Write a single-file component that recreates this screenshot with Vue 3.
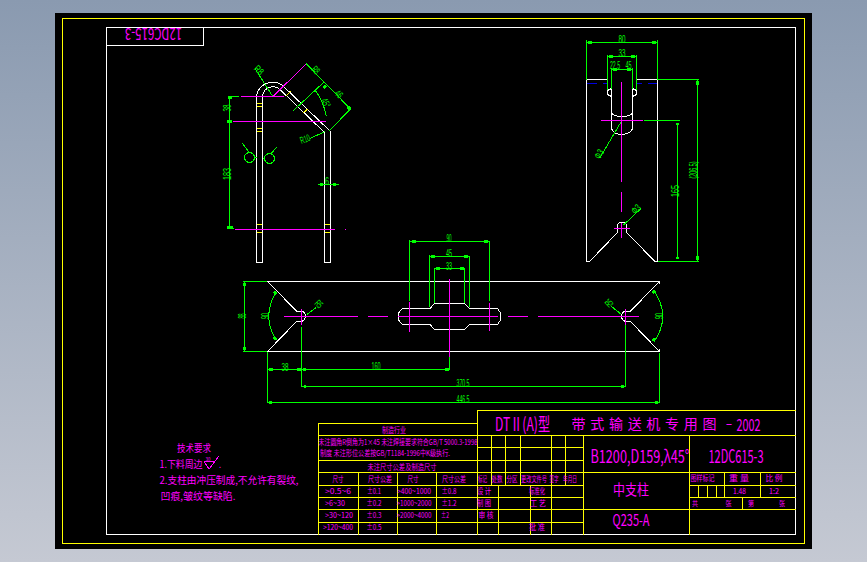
<script setup>
// every coordinate below is in screenshot pixels, the viewBox starts at the black area
const white = [
  // frame + flipped title box
  "M106.5 27.5H795.5V534.5H106.5Z M106.5 45.5H203.5V27.5",
  // bent rod, side view
  "M256.5 262.5V96A16.5 16.5 0 0 1 282 85L330.5 131.5V262.5H324.5V132.5L280 89.5A10.5 10.5 0 0 0 262.5 96V262.5Z",
  // front view plate
  "M586.5 79.5V261.5H589.5L617.5 232.5V226.5A4.5 4.5 0 0 1 626.5 226.5V232.5L655 261.5H657.5V79.5H636.5V94.5L632.5 96.5V88.5L636.5 90.5 M586.5 79.5H607.5V94.5L611.5 96.5V88.5L607.5 90.5",
  "M611.5 96.5V128.5Q613 134 621.5 134.5Q631 134 632.5 128.5V96.5",
  "M611.5 112.5Q613 116.5 621.5 116.5Q631 116.5 632.5 112.5",
  // plan view
  "M267.5 281.5H659.5L630.5 311H625.5A5.5 5.5 0 0 0 625.5 321.5H630.5L659.5 351.5H267.5L296.5 321.5H301.5A5.5 5.5 0 0 0 301.5 311H296.5L267.5 281.5",
  "M434.5 303.5H464.5L469.5 308.5H497.5L500.5 313V320L497.5 324.5H469.5L464.5 329.5H434.5L430 324.5H402.5L398.5 320V313L402.5 308.5H430Z",
  "M659.5 281.5V284 M659.5 351.5V349"
];

const green = [
  // rod dims
  "M229.5 96.5V228.5 M228 96.5H239 M228 228.5H234",
  "M306 63.5L350.5 109L328.5 131.5 M293.5 110.5L324 82 M255 68.5L272.5 96 M310 138.5L325 131.5",
  "M315 90Q323 100 326.5 116.5",
  "M242.5 143.5L249.5 153 M254.5 157.5H257 M276.5 147.5L271.5 153 M262.5 158.5H264.5",
  "M317.5 184.5H338.5",
  // front view dims
  "M586.5 40V79.5 M657.5 40V79.5 M586.5 42.5H657.5",
  "M607.5 55V90 M636.5 55V90 M607.5 56.5H636.5",
  "M611.5 68V89 M632.5 68V89 M611.5 69.5H632.5",
  "M599.5 158.5L621 122 M641 208.5L623.5 225",
  "M644 120.5H680 M677.5 123V258.5",
  "M657.5 79.5H698.5 M657.5 261.5H698.5 M697.5 79.5V261.5",
  // plan view dims
  "M244.5 281.5V351.5 M243 281.5H267 M243 351.5H267",
  "M275.5 293Q262 316.5 275.5 339 M653.5 290Q672 316.5 653.5 342.5",
  "M307 314.5L316 307.5 M611.5 306.5L621.5 314.5",
  "M409.5 239.5V301 M489.5 241V301 M409.5 241.5H489.5",
  "M429.5 254.5V307 M469.5 256V307 M429.5 256.5H469.5",
  "M434.5 267.5V303 M464.5 268V303 M434.5 268.5H464.5",
  "M267.5 351.5V402.5H659.5V353 M267.5 369.5H449.5V356",
  "M301.5 326.5V386.5H625.5V322"
];

const arrows = [
  "M228 97.5H232 M227 121.5H232 M227 227.5H233",
  "M324 86L326 88 M348 107L350 109",
  "M320 184.5H323 M333 184.5H336",
  "M588 42.5H592 M652 42.5H656 M609 56.5H613 M631 56.5H635 M613 69.5H617 M627 69.5H631",
  "M677.5 123V125 M677.5 257V259 M697 81V85 M697 256V260",
  "M244.5 283V286 M244.5 347V350",
  "M274 294L276 292 M274 337L276 340 M653 291L655 293 M653 341L655 338",
  "M412 241.5H416 M484 241.5H488 M431 256.5H435 M464 256.5H468 M436 268.5H440 M460 268.5H464",
  "M269 369.5H273 M297 369.5H301 M303 369.5H306 M445 369.5H449 M304 386.5H306 M621 386.5H624 M269 402.5H272 M655 402.5H658"
];

const magenta = [
  "M241 96.5H284 M233 121.5H326 M235 229.5H335 M345 229.5H346 M273.5 96L306 64",
  "M621.5 82V181.5 M621.5 192V211.5 M621.5 222.5V237.5 M601 120.5H643 M614 228.5H629.5",
  "M284 316.5H358 M368 316.5H388 M398 316.5H498 M508 316.5H528 M538 316.5H639",
  "M301.5 309V324.5 M409.5 302V331.5 M449.5 279V356.5 M489.5 303V331 M625.5 309V324.5"
];

const yellow = [
  "M62.5 18.5H804.5V543.5H62.5Z",
  "M318.5 534.5V423.5H477.5 M477.5 534.5V410.5H795.5",
  "M318.5 435.5H795.5 M318.5 460.5H477.5 M318.5 472.5H795.5",
  "M318.5 485H583.5 M318.5 497.5H583.5 M318.5 509.5H795.5 M318.5 522.5H583.5",
  "M358.5 472.5V534.5 M397.5 472.5V534.5 M436.5 472.5V534.5",
  "M491.5 435.5V485 M505.5 435.5V485 M520.5 435.5V485 M551.5 435.5V534.5 M565.5 435.5V485",
  "M477.5 447.5H583.5 M477.5 460.5H583.5",
  "M498.5 485V534.5 M530.5 485V534.5 M583.5 435.5V534.5 M689.5 435.5V534.5",
  "M689.5 485H795.5 M689.5 497.5H795.5",
  "M724.5 472.5V497.5 M760.5 472.5V497.5 M698.5 485V497.5 M707.5 485V497.5 M716.5 485V497.5 M742.5 497.5V509.5",
  // little fill marks on the rod
  "M257 103.5H262 M257 106.5H262 M257 128.5H262 M257 131.5H262 M257 224.5H262 M257 232.5H262",
  "M325 224.5H330 M325 232.5H330 M286 96L290.5 91.5 M303.5 112.5L308.5 108.5"
];

const dims = [
  { t: "R8", x: 259, y: 70, w: 9, r: 45 },
  { t: "R8", x: 316, y: 70, w: 7, r: 45 },
  { t: "46", x: 339, y: 94, w: 7, r: 45 },
  { t: "45°", x: 326, y: 103, w: 9, r: 60 },
  { t: "R10", x: 305, y: 139, w: 10, r: -20 },
  { t: "38", x: 227, y: 108, w: 7, r: -90 },
  { t: "183", x: 227, y: 174, w: 12, r: -90 },
  { t: "6", x: 327, y: 181, w: 4 },
  { t: "80", x: 622, y: 39, w: 7 },
  { t: "33", x: 622, y: 53, w: 7 },
  { t: "22.5", x: 615, y: 65, w: 10 },
  { t: "45", x: 628.5, y: 65, w: 6 },
  { t: "Φ3", x: 599, y: 154, w: 9, r: -60 },
  { t: "Φ3", x: 636, y: 209, w: 9, r: -45 },
  { t: "165", x: 675, y: 191, w: 12, r: -90 },
  { t: "(206.5)", x: 693, y: 170, w: 17, r: -90 },
  { t: "88", x: 242, y: 316, w: 5, r: -90 },
  { t: "90", x: 265, y: 316, w: 6, r: -90 },
  { t: "90", x: 659, y: 316, w: 6, r: -90 },
  { t: "R5", x: 319, y: 304, w: 7, r: 45 },
  { t: "R5", x: 609, y: 303, w: 7, r: -45 },
  { t: "90", x: 449, y: 238.5, w: 5 },
  { t: "45", x: 449, y: 253, w: 6 },
  { t: "33", x: 449, y: 266, w: 6 },
  { t: "38", x: 285, y: 367, w: 7 },
  { t: "160", x: 376, y: 366, w: 9 },
  { t: "370.5", x: 463, y: 383, w: 13 },
  { t: "446.5", x: 463, y: 399, w: 13 }
];

const notes = [
  { t: "技术要求", x: 194, y: 447, w: 34, f: 10 },
  { t: "1.下料周边", x: 181, y: 463, w: 43, f: 10 },
  { t: "30", x: 208, y: 458, w: 5, f: 5 },
  { t: ".", x: 220, y: 464, w: 2, f: 9 },
  { t: "2.支柱由冲压制成,不允许有裂纹,", x: 229, y: 479, w: 139, f: 10 },
  { t: "凹痕,皱纹等缺陷.", x: 198, y: 495, w: 75, f: 10 },

  { t: "制造行业", x: 394, y: 429.5, w: 24, f: 8 },
  { t: "未注圆角R倒角为1×45 未注焊接要求符合GB/T 5000.3-1998", x: 398, y: 441, w: 159, f: 8 },
  { t: "制度 未注形位公差按GB/T1184-1996中K级执行.", x: 385, y: 452.5, w: 130, f: 8 },
  { t: "未注尺寸公差及制造尺寸", x: 402, y: 466.5, w: 69, f: 8 },

  { t: "尺寸", x: 338, y: 478.5, w: 11, f: 8 },
  { t: "尺寸公差", x: 380, y: 478.5, w: 24, f: 8 },
  { t: "尺寸", x: 413, y: 478.5, w: 11, f: 8 },
  { t: "尺寸公差", x: 454, y: 478.5, w: 24, f: 8 },
  { t: ">0.5~6", x: 338, y: 490.5, w: 26, f: 8 },
  { t: "±0.1", x: 374, y: 490.5, w: 14, f: 8 },
  { t: ">400~1000", x: 414, y: 490.5, w: 34, f: 8 },
  { t: "±0.8", x: 449, y: 490.5, w: 15, f: 8 },
  { t: ">6~30", x: 335, y: 502.5, w: 20, f: 8 },
  { t: "±0.2", x: 374, y: 502.5, w: 15, f: 8 },
  { t: ">1000~2000", x: 414, y: 502.5, w: 35, f: 8 },
  { t: "±1.2", x: 449, y: 502.5, w: 15, f: 8 },
  { t: ">30~120", x: 339, y: 514.5, w: 28, f: 8 },
  { t: "±0.3", x: 374, y: 514.5, w: 15, f: 8 },
  { t: ">2000~4000", x: 414, y: 514.5, w: 35, f: 8 },
  { t: "±2", x: 445, y: 514.5, w: 8, f: 8 },
  { t: ">120~400", x: 338, y: 526.5, w: 30, f: 8 },
  { t: "±0.5", x: 374, y: 526.5, w: 15, f: 8 },

  { t: "标记", x: 482.5, y: 478.5, w: 9, f: 8 },
  { t: "处数", x: 497, y: 478.5, w: 11, f: 8 },
  { t: "分区", x: 512, y: 478.5, w: 11, f: 8 },
  { t: "更改文件号", x: 534, y: 478.5, w: 26, f: 8 },
  { t: "签字", x: 554, y: 478.5, w: 9, f: 8 },
  { t: "年月日", x: 570, y: 478.5, w: 14, f: 8 },
  { t: "设 计", x: 484, y: 490.5, w: 14, f: 8 },
  { t: "标准化", x: 537, y: 490.5, w: 16, f: 8 },
  { t: "制 图", x: 484, y: 502.5, w: 14, f: 8 },
  { t: "工 艺", x: 538, y: 502.5, w: 16, f: 8 },
  { t: "审 核", x: 486, y: 514.5, w: 15, f: 8 },
  { t: "批 准", x: 537, y: 526.5, w: 16, f: 8 },

  { t: "DTⅡ(A)型", x: 522.5, y: 423, w: 55, f: 18 },
  { t: "2002", x: 748.5, y: 423, w: 24, f: 17 },
  { t: "－", x: 729, y: 423, w: 7, f: 14 },
  { t: "B1200,D159,λ45°", x: 640, y: 455, w: 99, f: 18 },
  { t: "12DC615-3", x: 736, y: 454.5, w: 55, f: 18 },
  { t: "中支柱", x: 631, y: 488.5, w: 36, f: 15 },
  { t: "Q235-A", x: 631, y: 519, w: 37, f: 16 },
  { t: "图样标记", x: 702.5, y: 477.5, w: 24, f: 8 },
  { t: "重  量", x: 739, y: 477.5, w: 20, f: 8 },
  { t: "比  例", x: 774, y: 477.5, w: 17, f: 8 },
  { t: "1.48", x: 739.5, y: 490, w: 13, f: 8 },
  { t: "1:2", x: 774, y: 490, w: 10, f: 8 },
  { t: "共", x: 695, y: 503, w: 6, f: 7 },
  { t: "张", x: 728.5, y: 503, w: 6, f: 7 },
  { t: "第", x: 751, y: 503, w: 6, f: 7 },
  { t: "张", x: 782, y: 503, w: 6, f: 7 }
];

const tf = (d) => (d.r ? `rotate(${d.r} ${d.x} ${d.y})` : null);
</script>

<template>
  <main class="page">
    <svg class="sheet" viewBox="55 13 757 536">
      <g class="thin">
        <path v-for="d in white" :key="d" :d="d" stroke="#fff" />
        <path v-for="d in yellow" :key="d" :d="d" stroke="#ff0" />
        <path v-for="d in green" :key="d" :d="d" stroke="#0f0" />
        <path v-for="d in magenta" :key="d" :d="d" stroke="#f0f" />
        <path d="M587 83.5H597 M603 83.5H607 M637 83.5H642 M648 83.5H657" stroke="#0000e0" />
        <circle cx="249.5" cy="157.5" r="5" stroke="#0f0" />
        <circle cx="269.5" cy="158.5" r="5" stroke="#0f0" />
        <!-- surface finish mark -->
        <path d="M204 461.5H214 M204 461.5L209 469L219 456" stroke="#f0f" />
      </g>
      <path v-for="d in arrows" :key="d" :d="d" class="arrow" />

      <text
        v-for="d in dims"
        :key="d.t + d.x"
        class="dim"
        :x="d.x"
        :y="d.y"
        :textLength="d.w"
        lengthAdjust="spacingAndGlyphs"
        :transform="tf(d)"
      >{{ d.t }}</text>

      <text
        v-for="n in notes"
        :key="n.t + n.x"
        class="note"
        :x="n.x"
        :y="n.y"
        :font-size="n.f"
        :textLength="n.w"
        lengthAdjust="spacingAndGlyphs"
      >{{ n.t }}</text>

      <!-- wide-set title, the glyphs keep their shape -->
      <text class="note" x="644" y="423" font-size="14" textLength="145" lengthAdjust="spacing">带式输送机专用图</text>

      <text
        class="note"
        x="153.5"
        y="35"
        font-size="16"
        textLength="57"
        lengthAdjust="spacingAndGlyphs"
        transform="rotate(180 153.5 35)"
      >12DC615-3</text>
    </svg>
  </main>
</template>

<style scoped>
.page {
  box-sizing: border-box;
  width: 867px;
  height: 562px;
  padding: 13px 55px;
  background: linear-gradient(180deg, #8a9ab0, #c5c9d3);
}
.sheet {
  display: block;
  width: 757px;
  height: 536px;
  background: #000;
}
.thin path,
.thin circle {
  fill: none;
  stroke-width: 1;
  shape-rendering: crispEdges;
}
.arrow {
  fill: none;
  stroke: #0f0;
  stroke-width: 3;
  shape-rendering: crispEdges;
}
.dim {
  fill: #0f0;
  font-family: "Liberation Sans", sans-serif;
  font-size: 10px;
  text-anchor: middle;
  dominant-baseline: central;
}
.note {
  fill: #f0f;
  font-family: "Noto Sans CJK SC", "Liberation Sans", sans-serif;
  text-anchor: middle;
  dominant-baseline: central;
}
</style>
